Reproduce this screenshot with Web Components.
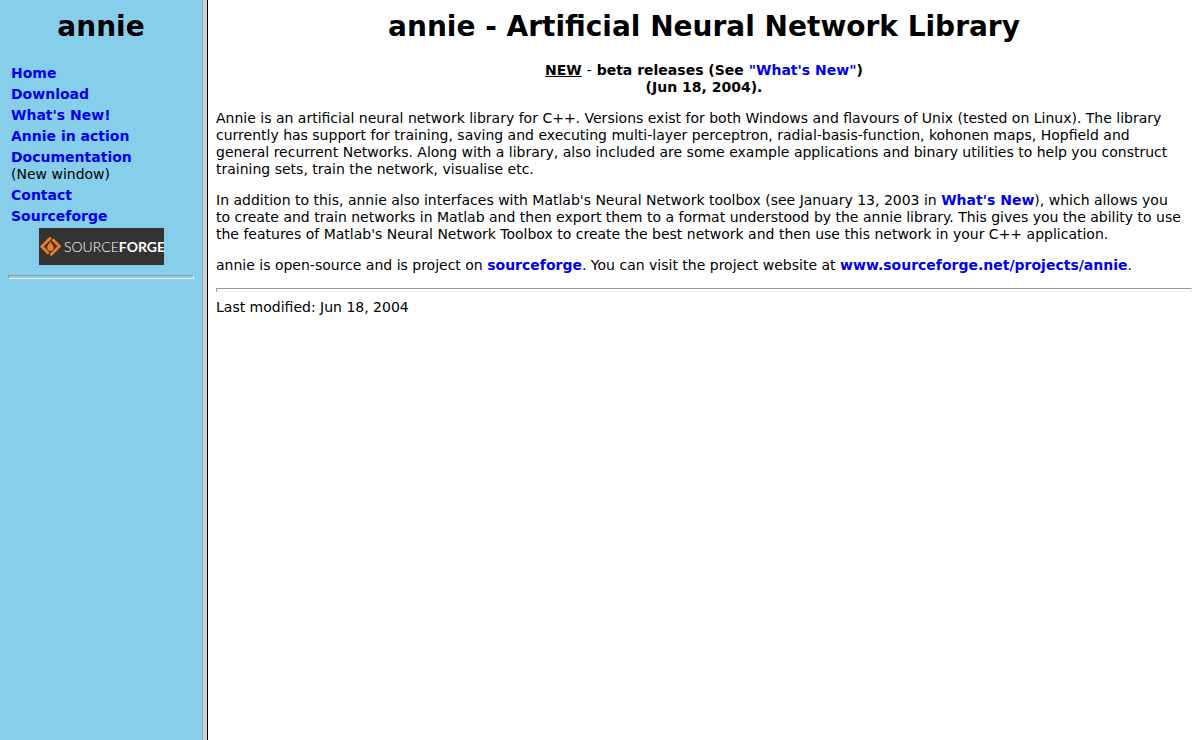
<!DOCTYPE html>
<html lang="en">
<head>
<meta charset="utf-8">
<meta name="viewport" content="width=device-width, initial-scale=1">
<title>annie - Artificial Neural Network Library</title>
<style>
html, body { margin: 0; min-height: 100%; }
body { background: #fff; color: #000; font: 14px/17px Verdana, "DejaVu Sans", sans-serif; }
</style>
</head>
<body>
<annie-page>
  <annie-sidebar slot="sidebar"></annie-sidebar>
  <annie-article></annie-article>
</annie-page>

<template id="page-template">
  <style>
    :host { display: grid; grid-template-columns: minmax(202px, 16.8%) 6px minmax(0, 1fr); min-height: 100vh; }
    .divider { box-sizing: border-box; background: #cfcfcf; border-left: 1px solid #a5a5a5; border-right: 1px solid #000; }
    aside { background: #87ceeb; }
    aside, main { padding: 8px; }
  </style>
  <aside><slot name="sidebar"></slot></aside>
  <div class="divider"></div>
  <main><slot></slot></main>
</template>

<template id="sidebar-template">
  <style>
    :host { display: block; }
    h1 { margin: 0 0 20px; font-size: 28px; line-height: 37px; text-align: center; }
    nav { display: grid; gap: 4px; padding: 0 3px; }
    annie-rule { margin-top: 10px; }
  </style>
  <h1>annie</h1>
  <nav>
    <nav-item href="#home">Home</nav-item>
    <nav-item href="#download">Download</nav-item>
    <nav-item href="#new">What's New!</nav-item>
    <nav-item href="#action">Annie in action</nav-item>
    <nav-item href="#docs">Documentation<span slot="note">(New window)</span></nav-item>
    <nav-item href="#contact">Contact</nav-item>
    <nav-item href="#sourceforge">Sourceforge</nav-item>
  </nav>
  <sourceforge-logo></sourceforge-logo>
  <annie-rule></annie-rule>
</template>

<template id="nav-item-template">
  <style>
    :host { display: block; }
    a { color: #00e; font-weight: bold; text-decoration: none; }
    ::slotted([slot="note"]) { display: block; }
  </style>
  <a><slot></slot></a><slot name="note"></slot>
</template>

<template id="logo-template">
  <style>
    :host { display: flex; justify-content: center; margin-top: 3px; }
    a { display: block; width: 125px; height: 37px; background: #333; }
    svg { display: block; }
    text { font: 300 14px Lato, sans-serif; fill: #fff; }
    .strong { font-weight: bold; }
  </style>
  <a href="#sourceforge" aria-label="SourceForge">
    <svg width="125" height="37" viewBox="0 0 125 37">
      <g fill="none" stroke="#f07b22" stroke-width="2.8" stroke-linejoin="miter">
        <path d="M11.8 9.6 2.8 18.6 9.6 25.4"/>
        <path d="M13.4 11.2 20.4 18.2 11.4 27.2"/>
      </g>
      <path fill="#f07b22" d="M11.2 12.6c.4 2.8 3.4 4.2 3.4 7 0 2-1.3 3.4-3.1 3.4-2 0-3.3-1.4-3.3-3.3 0-2.6 2.7-4 3-7.1z"/>
      <text x="25" y="24">SOURCE<tspan class="strong">FORGE</tspan></text>
    </svg>
  </a>
</template>

<template id="rule-template">
  <style>
    :host { display: block; }
    hr { box-sizing: border-box; height: 4px; margin: 0; border: 1px solid; border-color: #999 #eee #eee #999; }
  </style>
  <hr>
</template>

<template id="article-template">
  <style>
    :host { display: block; }
    h1 { margin: 0 0 17px; font-size: 28px; line-height: 37px; text-align: center; }
    p { margin: 0 0 14px; }
    .release { text-align: center; font-weight: bold; }
    .dash { font-weight: normal; }
    a { color: #00e; font-weight: bold; text-decoration: none; }
    annie-rule { margin-bottom: 7px; }
  </style>
  <h1>annie - Artificial Neural Network Library</h1>
  <p class="release"><u>NEW</u> <span class="dash">-</span> beta releases (See <a href="#new">"What's New"</a>)<br>(Jun 18, 2004).</p>
  <p>Annie is an artificial neural network library for C++. Versions exist for both Windows and flavours of Unix (tested on Linux). The library currently has support for training, saving and executing multi-layer perceptron, radial-basis-function, kohonen maps, Hopfield and<br>general recurrent Networks. Along with a library, also included are some example applications and binary utilities to help you construct<br>training sets, train the network, visualise etc.</p>
  <p>In addition to this, annie also interfaces with Matlab's Neural Network toolbox (see January 13, 2003 in <a href="#new">What's New</a>), which allows you<br>to create and train networks in Matlab and then export them to a format understood by the annie library. This gives you the ability to use<br>the features of Matlab's Neural Network Toolbox to create the best network and then use this network in your C++ application.</p>
  <p>annie is open-source and is project on <a href="#sourceforge">sourceforge</a>. You can visit the project website at <a href="#project">www.sourceforge.net/projects/annie</a>.</p>
  <annie-rule></annie-rule>
  <footer>Last modified: Jun 18, 2004</footer>
</template>

<script>
class TemplateElement extends HTMLElement {
  constructor() {
    super();
    const template = document.getElementById(this.constructor.template);
    this.attachShadow({ mode: "open" }).append(template.content.cloneNode(true));
  }
}
class AnniePage extends TemplateElement { static template = "page-template"; }
class AnnieSidebar extends TemplateElement { static template = "sidebar-template"; }
class AnnieArticle extends TemplateElement { static template = "article-template"; }
class AnnieRule extends TemplateElement { static template = "rule-template"; }
class SourceforgeLogo extends TemplateElement { static template = "logo-template"; }
class NavItem extends TemplateElement {
  static template = "nav-item-template";
  connectedCallback() {
    this.shadowRoot.querySelector("a").href = this.getAttribute("href");
  }
}
customElements.define("annie-rule", AnnieRule);
customElements.define("nav-item", NavItem);
customElements.define("sourceforge-logo", SourceforgeLogo);
customElements.define("annie-sidebar", AnnieSidebar);
customElements.define("annie-article", AnnieArticle);
customElements.define("annie-page", AnniePage);
</script>
</body>
</html>
